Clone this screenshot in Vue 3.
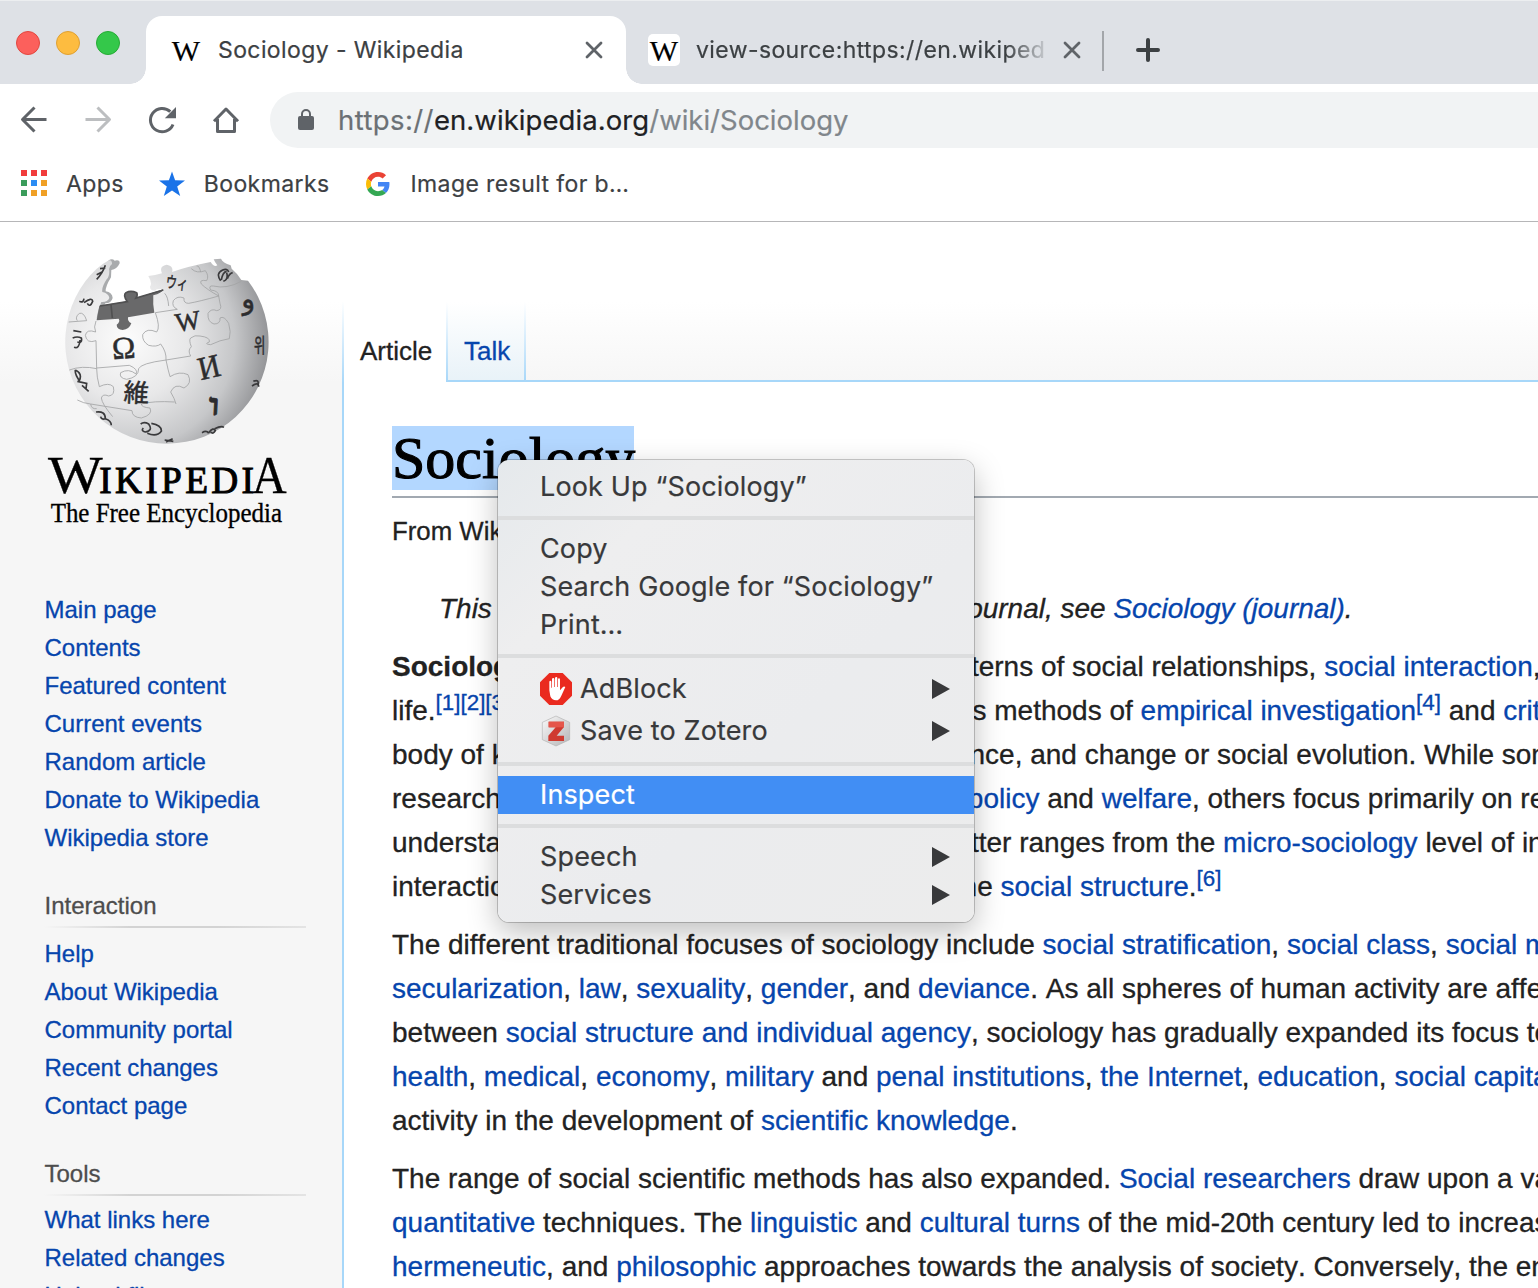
<script setup>
const pages = [
  { title: '', items: ['Main page', 'Contents', 'Featured content', 'Current events', 'Random article', 'Donate to Wikipedia', 'Wikipedia store'] },
  { title: 'Interaction', items: ['Help', 'About Wikipedia', 'Community portal', 'Recent changes', 'Contact page'] },
  { title: 'Tools', items: ['What links here', 'Related changes', 'Upload file'] },
]

// Segment kinds: t = text, a = link, b = bold, s = reference mark
const paragraphs = [
  [
    [['b', 'Sociology'], ['t', ' is the scientific study of society, patterns of social relationships, '], ['a', 'social interaction'], ['t', ', and culture of everyday']],
    [['t', 'life.'], ['s', '[1][2][3]'], ['t', ' It is a social science that uses various methods of '], ['a', 'empirical investigation'], ['s', '[4]'], ['t', ' and '], ['a', 'critical analysis']],
    [['t', 'body of knowledge about social order, acceptance, and change or social evolution. While some sociologists conduct']],
    [['t', 'research that may be applied directly to '], ['a', 'social policy'], ['t', ' and '], ['a', 'welfare'], ['t', ', others focus primarily on refining the']],
    [['t', 'understanding of social processes. Subject matter ranges from the '], ['a', 'micro-sociology'], ['t', ' level of individual agency and']],
    [['t', 'interaction to the macro level of systems and the '], ['a', 'social structure'], ['t', '.'], ['s', '[6]']],
  ],
  [
    [['t', 'The different traditional focuses of sociology include '], ['a', 'social stratification'], ['t', ', '], ['a', 'social class'], ['t', ', '], ['a', 'social mobility'], ['t', ',']],
    [['a', 'secularization'], ['t', ', '], ['a', 'law'], ['t', ', '], ['a', 'sexuality'], ['t', ', '], ['a', 'gender'], ['t', ', and '], ['a', 'deviance'], ['t', '. As all spheres of human activity are affected by']],
    [['t', 'between '], ['a', 'social structure and individual agency'], ['t', ', sociology has gradually expanded its focus to other']],
    [['a', 'health'], ['t', ', '], ['a', 'medical'], ['t', ', '], ['a', 'economy'], ['t', ', '], ['a', 'military'], ['t', ' and '], ['a', 'penal institutions'], ['t', ', '], ['a', 'the Internet'], ['t', ', '], ['a', 'education'], ['t', ', '], ['a', 'social capital'], ['t', ',']],
    [['t', 'activity in the development of '], ['a', 'scientific knowledge'], ['t', '.']],
  ],
  [
    [['t', 'The range of social scientific methods has also expanded. '], ['a', 'Social researchers'], ['t', ' draw upon a variety of']],
    [['a', 'quantitative'], ['t', ' techniques. The '], ['a', 'linguistic'], ['t', ' and '], ['a', 'cultural turns'], ['t', ' of the mid-20th century led to increasingly']],
    [['a', 'hermeneutic'], ['t', ', and '], ['a', 'philosophic'], ['t', ' approaches towards the analysis of society. Conversely, the end of']],
  ],
]

const menu = [
  [{ label: 'Look Up “Sociology”' }],
  [{ label: 'Copy' }, { label: 'Search Google for “Sociology”' }, { label: 'Print…' }],
  [{ label: 'AdBlock', icon: 'adblock', sub: true }, { label: 'Save to Zotero', icon: 'zotero', sub: true }],
  [{ label: 'Inspect', active: true }],
  [{ label: 'Speech', sub: true }, { label: 'Services', sub: true }],
]

const appColors = ['#f13c3c', '#f13c3c', '#f13c3c', '#3b9c5b', '#2a8cf4', '#f0a026', '#3b9c5b', '#f0a026', '#f0a026']
</script>

<template>
  <div class="window">
    <div class="tabstrip">
      <div class="lights"><i class="red"></i><i class="yellow"></i><i class="green"></i></div>
      <div class="tab active">
        <span class="favicon">W</span>
        <span class="tab-title">Sociology - Wikipedia</span>
        <svg class="close" viewBox="0 0 18 18"><path d="M2 2 16 16M16 2 2 16" /></svg>
      </div>
      <div class="tab second">
        <span class="favicon boxed">W</span>
        <span class="tab-title faded">view-source:https://en.wikiped</span>
        <svg class="close" viewBox="0 0 18 18"><path d="M2 2 16 16M16 2 2 16" /></svg>
      </div>
      <span class="divider"></span>
      <svg class="plus" viewBox="0 0 24 24"><path d="M12 2V22M2 12H22" /></svg>
    </div>

    <div class="toolbar">
      <svg class="nav-icon" viewBox="0 0 32 32"><path d="M28.500 15.500H5M16.500 3.500 4.500 15.500 16.500 27.500" /></svg>
      <svg class="nav-icon disabled" viewBox="0 0 32 32"><path d="M3.500 15.500H27M15.500 3.500 27.500 15.500 15.500 27.500" /></svg>
      <svg class="nav-icon" viewBox="0 0 32 32">
        <path d="M27 20.500A11.700 11.700 0 1 1 24.300 7.700" />
        <path class="solid" d="M30 3V14.300H18.800Z" />
      </svg>
      <svg class="nav-icon" viewBox="0 0 32 32"><path d="M4 17.300 16 5 28 17.300M7.500 15V27.500H24.500V15" /></svg>
      <div class="omnibox">
        <svg class="lock" viewBox="0 0 18 22"><rect x="1" y="7" width="16" height="14" rx="2" /><path d="M5 8V5A4 4 0 0 1 13 5V8" /></svg>
        <span class="url"><span class="scheme">https://</span><span class="host">en.wikipedia.org</span><span>/wiki/Sociology</span></span>
      </div>
    </div>

    <div class="bookmarks">
      <div class="bookmark apps">
        <span class="app-grid"><i v-for="(c, i) in appColors" :key="i" :style="{ background: c }"></i></span>
        <span>Apps</span>
      </div>
      <div class="bookmark star">
        <svg viewBox="0 0 26 26"><path d="M13 .5 16.100 9.200 26 9.500 18.200 15.500 21.200 25 13 19.400 4.800 25 7.800 15.500 0 9.500 9.900 9.200Z" /></svg>
        <span>Bookmarks</span>
      </div>
      <div class="bookmark google">
        <svg viewBox="0 0 48 48">
          <path fill="#ea4335" d="M24 9.500c3.540 0 6.710 1.220 9.210 3.600l6.850-6.850C35.900 2.380 30.470 0 24 0 14.620 0 6.510 5.380 2.560 13.220l7.980 6.190C12.430 13.720 17.740 9.500 24 9.500z" />
          <path fill="#4285f4" d="M46.980 24.550c0-1.570-.15-3.090-.38-4.550H24v9.020h12.940c-.58 2.960-2.260 5.480-4.780 7.180l7.730 6c4.510-4.180 7.090-10.360 7.090-17.650z" />
          <path fill="#fbbc05" d="M10.530 28.590c-.48-1.450-.76-2.990-.76-4.590s.27-3.140.76-4.590l-7.980-6.190C.92 16.460 0 20.120 0 24c0 3.880.92 7.540 2.560 10.780l7.970-6.190z" />
          <path fill="#34a853" d="M24 48c6.480 0 11.930-2.130 15.890-5.810l-7.730-6c-2.150 1.450-4.920 2.300-8.160 2.300-6.260 0-11.570-4.220-13.470-9.910l-7.980 6.190C6.510 42.620 14.620 48 24 48z" />
        </svg>
        <span>Image result for b…</span>
      </div>
    </div>

    <div class="page">
      <aside class="sidebar">
        <svg class="logo" viewBox="0 0 780 900">
          <defs>
            <radialGradient id="ball" gradientUnits="userSpaceOnUse" cx="260" cy="300" r="450">
              <stop offset="0" stop-color="#fcfcfc" />
              <stop offset=".4" stop-color="#e8e8e9" />
              <stop offset=".72" stop-color="#c6c7c9" />
              <stop offset="1" stop-color="#88898c" />
            </radialGradient>
          </defs>
          <path fill="#a9abad" d="M205 62Q216 54 224 62Q240 58 239 70Q231 88 214 90L213 112Q196 140 197 154Q217 157 218 174Q214 190 196 190L168 243 140 150Z" />
          <path
            fill="url(#ball)"
            d="M203 63Q216 56 216 72Q205 80 208 92Q208 110 200 118Q184 142 187 156Q206 160 208 174Q203 187 184 186Q170 220 170 241L343 218Q336 190 341 166Q368 160 370 150Q350 143 345 152Q330 152 330 140Q338 130 325 108Q345 106 366 100Q356 78 380 74Q402 78 396 96Q440 80 512 66Q522 82 532 76Q524 66 521 58L543 56Q548 68 572 76L575 86Q592 100 604 120L624 122A305 305 0 1 1 136 124Q170 80 203 63Z"
          />
          <path fill="#69696a" d="M178 197 262 184Q248 166 258 158Q272 148 290 158Q294 165 288 174L370 148Q366 160 340 166Q338 190 343 218L264 232Q262 244 274 250Q268 268 248 270Q230 268 230 254Q242 244 236 236L170 241Z" />
          <path fill="none" stroke="#505051" stroke-width="5" d="M180 198 262 185Q248 166 258 158Q272 150 290 158Q294 165 288 174L370 150M213 194 217 234" />
          <g class="seams">
            <path d="M86 246 140 242Q132 216 118 220Q104 232 112 242M168 243Q160 262 167 276Q140 266 136 286Q140 312 168 302L170 386Q126 376 88 390M170 384 268 376Q296 388 288 402Q266 384 242 398Q236 414 260 418Q296 412 296 386Q302 370 378 360M378 360Q380 336 362 312Q350 322 326 316Q306 304 308 284Q320 262 350 276Q362 262 346 218M378 360 452 348Q442 332 454 320Q446 300 452 294Q464 284 480 288Q512 292 508 306Q490 312 512 314Q540 300 568 296Q574 276 566 250Q552 226 540 234Q542 252 522 252Q502 246 504 220Q514 204 530 212Q548 210 540 190L536 168M346 218 412 208Q394 200 400 182Q412 166 432 174Q430 190 446 190Q480 184 536 168M536 168Q536 152 512 150Q504 136 520 138Q560 148 604 124M482 96Q478 76 470 78M454 86Q470 102 496 92Q508 108 500 122Q476 118 484 132Q500 148 536 168M386 198Q384 170 374 160" />
            <path d="M170 386Q170 410 178 440Q206 426 220 440Q226 466 206 468Q188 460 184 474Q186 492 218 530M378 360Q384 390 390 410Q418 392 444 404Q458 430 432 444Q404 428 392 456Q404 476 408 492M112 480Q130 490 152 492Q154 508 170 506M152 492 276 512Q276 532 304 534Q340 524 330 504Q304 502 304 492Q340 482 404 486 420 490Q436 490 446 478Q436 466 456 462Q482 472 472 486L546 452Q544 436 558 424Q574 416 600 420Q614 432 598 444M408 492Q420 528 408 550Q366 528 374 558Q384 578 408 570Q440 558 442 600M546 452Q548 420 544 392M568 296Q576 336 604 346Q630 330 628 352Q628 374 598 366Q596 400 608 420L644 406M568 296Q640 284 656 260Q650 240 676 222M228 570Q240 560 280 580Q300 592 340 596M598 464Q604 492 570 488Q566 506 592 510 560 544" />
          </g>
          <g class="glyphs">
            <text x="218" y="358" font-size="94" transform="rotate(-4 218 358)">Ω</text>
            <text x="410" y="276" font-size="80" transform="rotate(-9 410 276)">W</text>
            <text x="482" y="421" font-size="98" textLength="66" lengthAdjust="spacingAndGlyphs" transform="rotate(-13 482 421)">И</text>
            <text x="250" y="484" font-size="76" class="cjk" transform="rotate(3 250 484)">維</text>
            <text x="376" y="142" font-size="48" class="cjk" textLength="66" lengthAdjust="spacingAndGlyphs" transform="rotate(7 376 142)">ウィ</text>
            <text x="642" y="340" font-size="60" class="cjk kr" textLength="34" lengthAdjust="spacingAndGlyphs">위</text>
            <text x="606" y="208" font-size="84" transform="rotate(-8 606 208)">و</text>
            <text x="504" y="524" font-size="92" font-weight="bold" textLength="36" lengthAdjust="spacingAndGlyphs" transform="rotate(3 504 524)">ו</text>
          </g>
          <g class="marks">
            <path d="M170 118Q188 100 196 76M170 104 186 96M180 86 196 84M118 184Q130 190 132 176M132 188Q156 170 158 184Q150 204 142 190M100 272 124 276M98 294Q112 288 124 294Q128 310 112 306M102 322Q118 328 120 300M106 390Q128 400 118 422Q104 402 106 390M112 424 140 430 138 446M126 436 146 454M168 516Q196 512 196 536Q184 540 182 530M196 536Q214 542 214 556M302 552Q312 544 326 552Q340 572 316 576Q302 572 310 564M334 550Q366 556 364 574Q350 592 322 580M486 578Q500 570 506 580M506 578Q520 560 526 572Q520 584 512 576M524 566Q544 556 552 562M374 600 400 604M378 606 398 596M636 438Q656 424 656 440 640 450Q656 450 648 464 634 472" />
            <path stroke-width="6" d="M542 122Q526 100 548 90Q562 84 566 96M544 120Q548 96 560 94M550 124Q566 118 560 98M562 116Q568 100 578 98M640 424Q658 416 654 436" />
          </g>
          <text class="word" x="24" y="758" font-size="158" textLength="164" lengthAdjust="spacingAndGlyphs">W</text>
          <text class="word caps" x="178" y="758" font-size="112" textLength="464" lengthAdjust="spacing">IKIPEDI</text>
          <text class="word" x="636" y="758" font-size="158" textLength="104" lengthAdjust="spacingAndGlyphs">A</text>
          <text class="word thin" x="32" y="845" font-size="81" textLength="694" lengthAdjust="spacingAndGlyphs">The Free Encyclopedia</text>
        </svg>
        <nav v-for="s in pages" :key="s.title" class="portal">
          <h3 v-if="s.title">{{ s.title }}</h3>
          <ul><li v-for="i in s.items" :key="i"><a>{{ i }}</a></li></ul>
        </nav>
      </aside>

      <main class="main">
        <div class="views">
          <span class="view current">Article</span>
          <span class="view talk">Talk</span>
          <span class="rest"></span>
        </div>
        <article class="content">
          <h1><span>Sociology</span></h1>
          <p class="sub">From Wikipedia, the free encyclopedia</p>
          <p class="hatnote line">This article is about the discipline. For the journal, see <a>Sociology (journal)</a>.</p>
          <div v-for="(p, pi) in paragraphs" :key="pi" class="para">
            <div v-for="(l, li) in p" :key="li" class="line">
              <template v-for="(s, si) in l" :key="si"><a v-if="s[0] === 'a'">{{ s[1] }}</a><b v-else-if="s[0] === 'b'">{{ s[1] }}</b><sup v-else-if="s[0] === 's'">{{ s[1] }}</sup><span v-else>{{ s[1] }}</span></template>
            </div>
          </div>
        </article>
      </main>
    </div>

    <div class="context-menu">
      <div v-for="(g, gi) in menu" :key="gi" class="group">
        <div v-for="it in g" :key="it.label" class="item" :class="{ active: it.active, tall: it.icon }">
          <svg v-if="it.icon === 'adblock'" class="item-icon" viewBox="0 0 96 96">
            <path fill="#ea2a1f" d="M28 0H68L96 28V68L68 96H28L0 68V28Z" />
            <path fill="#fff" d="M28 52V27Q28 23 31 23 34 23 34 27V44H36V19Q36 15 40 15 43 15 43 19V42H45V16Q45 12 49 12 52 12 52 16V42H54V19Q54 16 57 16 60 16 60 20V52L68 43Q72 38 76 42L64 68Q58 82 48 82 36 82 31 70Z" />
          </svg>
          <svg v-else-if="it.icon === 'zotero'" class="item-icon" viewBox="0 0 96 96">
            <defs><linearGradient id="hex" x1="0" y1="0" x2="1" y2="1"><stop offset="0" stop-color="#fafafa" /><stop offset="1" stop-color="#b4b4b6" /></linearGradient></defs>
            <path fill="url(#hex)" stroke="#b4b4b4" stroke-width="2" d="M48 3 89 22V74L48 93 7 74V22Z" />
            <path fill="#cf3a30" d="M26 20H72V36L50 62H72V78H25V62L47 37H26Z" />
            <path fill="#e5564b" d="M26 20H72V37H26Z" />
          </svg>
          <span class="label">{{ it.label }}</span>
          <svg v-if="it.sub" class="arrow" viewBox="0 0 18 20"><path d="M0 0 18 10 0 20Z" /></svg>
        </div>
      </div>
    </div>
  </div>
</template>

<style>
body { margin: 0; }
</style>

<style scoped>
* { box-sizing: border-box; }
.window { position: relative; width: 1538px; height: 1288px; overflow: hidden; background: #fff; font-family: Inter, "Liberation Sans", sans-serif; color: #3c4043; display: flex; flex-direction: column; -webkit-text-stroke: .2px; }
svg { display: block; flex: none; }

.tabstrip { height: 84px; flex: none; background: #dee1e6; border-top: 1px solid #eceef0; display: flex; }
.lights { width: 146px; padding: 30px 0 0 16px; display: flex; gap: 16px; flex: none; }
.lights i { width: 24px; height: 24px; border-radius: 50%; border: 1px solid; }
.lights .red { background: #fc605c; border-color: #e2473f; }
.lights .yellow { background: #fdbc40; border-color: #dfa032; }
.lights .green { background: #34c84a; border-color: #26ab35; }
.tab { display: flex; align-items: center; font-size: 23px; letter-spacing: .4px; white-space: nowrap; }
.tab-title { flex: 1; }
.active.tab { position: relative; margin-top: 15px; width: 480px; height: 68px; background: #fff; border-radius: 16px 16px 0 0; padding: 0 23px 0 24px; flex: none; }
.active.tab::before, .active.tab::after { content: ""; position: absolute; bottom: 0; width: 16px; height: 16px; }
.active.tab::before { left: -16px; background: radial-gradient(circle at 0 0, transparent 15.500px, #fff 16px); }
.active.tab::after { right: -16px; background: radial-gradient(circle at 100% 0, transparent 15.500px, #fff 16px); }
.second { margin-top: 15px; height: 68px; width: 476px; padding: 0 21px 0 22px; flex: none; }
.favicon { width: 32px; height: 32px; border-radius: 5px; font: 30px/34px "Liberation Serif", serif; letter-spacing: 0; color: #000; text-align: center; margin-right: 16px; flex: none; }
.boxed { background: #fff; }
.faded { overflow: hidden; -webkit-mask-image: linear-gradient(90deg, #000 310px, transparent 356px); mask-image: linear-gradient(90deg, #000 310px, transparent 356px); }
.close { width: 18px; height: 18px; stroke: #5f6368; stroke-width: 2.800; stroke-linecap: round; }
.divider { width: 2px; height: 40px; background: #a3a6aa; margin-top: 30px; }
.plus { width: 24px; height: 24px; margin: 37px 0 0 32px; stroke: #3c4043; stroke-width: 4; stroke-linecap: round; }

.toolbar { height: 72px; flex: none; display: flex; align-items: center; padding-left: 18px; }
.nav-icon { width: 32px; height: 32px; margin-right: 32px; fill: none; stroke: #5f6368; stroke-width: 3; stroke-linejoin: round; }
.nav-icon .solid { fill: #5f6368; stroke: none; }
.nav-icon.disabled { stroke: #bcbec0; }
.omnibox { flex: 1; height: 56px; margin-left: -4px; background: #f1f3f4; border-radius: 28px 0 0 28px; display: flex; align-items: center; padding-left: 27px; }
.lock { width: 18px; height: 22px; margin-right: 23px; fill: #5f6368; }
.lock path { fill: none; stroke: #5f6368; stroke-width: 2; }
.url { font-size: 27.500px; color: #80868b; }
.scheme { color: #6b7075; letter-spacing: .4px; }
.host { color: #202124; letter-spacing: .08px; }

.bookmarks { height: 66px; flex: none; border-bottom: 1px solid #b6b6b8; display: flex; font-size: 23px; letter-spacing: .4px; padding: 0 0 9px 21px; }
.bookmark { display: flex; align-items: center; }
.app-grid { display: grid; grid-template-columns: repeat(3, 6px); gap: 4px; margin: -2px 19px 0 0; }
.app-grid i { height: 6px; }
.star svg { width: 26px; height: 26px; fill: #1a73e8; margin: -1px 19px 0 35px; }
.google svg { width: 24px; height: 24px; margin: 0 20px 0 37px; }

.page { flex: 1; display: flex; background: linear-gradient(#fff 80px, #f6f6f6 160px); font-family: "Liberation Sans", Arial, sans-serif; font-kerning: none; -webkit-text-stroke: .3px; }
.sidebar { width: 342px; flex: none; padding: 18px 36px 0 44px; }
.logo { width: 260px; height: 300px; margin-left: -4px; }
.logo text { -webkit-text-stroke: 0; }
.seams path { fill: none; stroke: #a2a3a5; stroke-width: 2.500; }
.glyphs { font-family: "Liberation Serif", "DejaVu Sans", serif; fill: #2c2c2e; }
.logo .glyphs text { stroke: #2c2c2e; stroke-width: 1.500px; }
.cjk { font-family: "Noto Sans CJK JP", sans-serif; }
.cjk.kr { font-family: "Noto Sans CJK KR", sans-serif; }
.marks path { fill: none; stroke: #3a3a3c; stroke-width: 5; }
.logo .word { font-family: "Liberation Serif", serif; fill: #000; stroke: #000; stroke-width: 1px; }
.logo .caps { stroke-width: 3px; }
.portal { margin-bottom: 30px; }
.logo + .portal { margin-top: 51px; }
.portal h3 { margin: 0; height: 48px; padding-left: .5px; font-weight: 400; font-size: 24px; line-height: 38px; font-kerning: normal; color: #4d4d4d; background: linear-gradient(90deg, transparent, #d3d3d3 33%, #d3d3d3 66%, #e4e4e4) 0 39px / 262px 2px no-repeat; }
.portal:last-child h3 { height: 46px; }
.portal ul { list-style: none; margin: 0; padding: 0 0 0 .5px; font-size: 24px; line-height: 38px; white-space: nowrap; }
a, sup { color: #0645ad; }

.main { width: 1196px; flex: none; display: flex; flex-direction: column; }
.views { height: 160px; flex: none; padding-top: 80px; display: flex; font-size: 26px; line-height: 98px; font-kerning: normal; }
.view { border-left: 2px solid; border-image: linear-gradient(#fff, #a7d7f9) 1; }
.current { width: 104px; padding-left: 16px; color: #222; background: #fff; }
.talk { width: 80px; height: 80px; color: #0645ad; border: 0; background: linear-gradient(#fff, #a7d7f9) 0 0 / 2px 100% no-repeat, linear-gradient(#fff, #a7d7f9) 100% 0 / 2px 100% no-repeat, linear-gradient(#a7d7f9, #a7d7f9) 0 100% / 100% 2px no-repeat, linear-gradient(#fff, #e8f2f8); padding-left: 18px; }
.rest { flex: 1; border-bottom: 2px solid #a7d7f9; }
.content { flex: 1; background: #fff; border-left: 2px solid #a7d7f9; padding: 44px 0 0 48px; color: #222; font-size: 28px; line-height: 44px; white-space: nowrap; }
h1 { margin: 0; height: 72px; border-bottom: 2px solid #a2a9b1; font: 60px/64px "Liberation Serif", Georgia, serif; color: #000; -webkit-text-stroke: 1.100px #000; }
h1 span { display: inline-block; width: 242px; height: 64px; background: #b3d7ff; }
.sub { margin: 11px 0 0; font-size: 25.800px; }
.hatnote { margin: 34px 0 14px 47px; font-style: italic; letter-spacing: -.02px; }
.para { margin-bottom: 14px; }
.line { height: 44px; }
sup { font-size: 22.400px; line-height: 0; vertical-align: 10px; }

.context-menu { position: absolute; left: 498px; top: 460px; width: 476px; height: 462px; padding: 8px 0; border-radius: 11px; overflow: hidden; background: linear-gradient(135deg, #e5e9ec, #eeeeef 22%, #ebecee 60%, #ececec); box-shadow: 0 0 0 1px rgba(0, 0, 0, .2), 0 10px 30px rgba(0, 0, 0, .26); font-size: 27px; letter-spacing: .14px; color: #38393b; z-index: 2; }
.group + .group::before { content: ""; display: block; height: 4px; margin: 10px 0; background: #dcddde; }
.item { height: 38px; display: flex; align-items: center; padding: 0 24px 0 42px; }
.item.tall { height: 42px; }
.item.active { background: #418ef4; color: #fff; }
.item-icon { width: 32px; height: 32px; margin-right: 8px; }
.label { white-space: nowrap; padding-bottom: 2px; }
.arrow { width: 18px; height: 20px; margin: -1px 0 0 auto; fill: #38393b; }
</style>
